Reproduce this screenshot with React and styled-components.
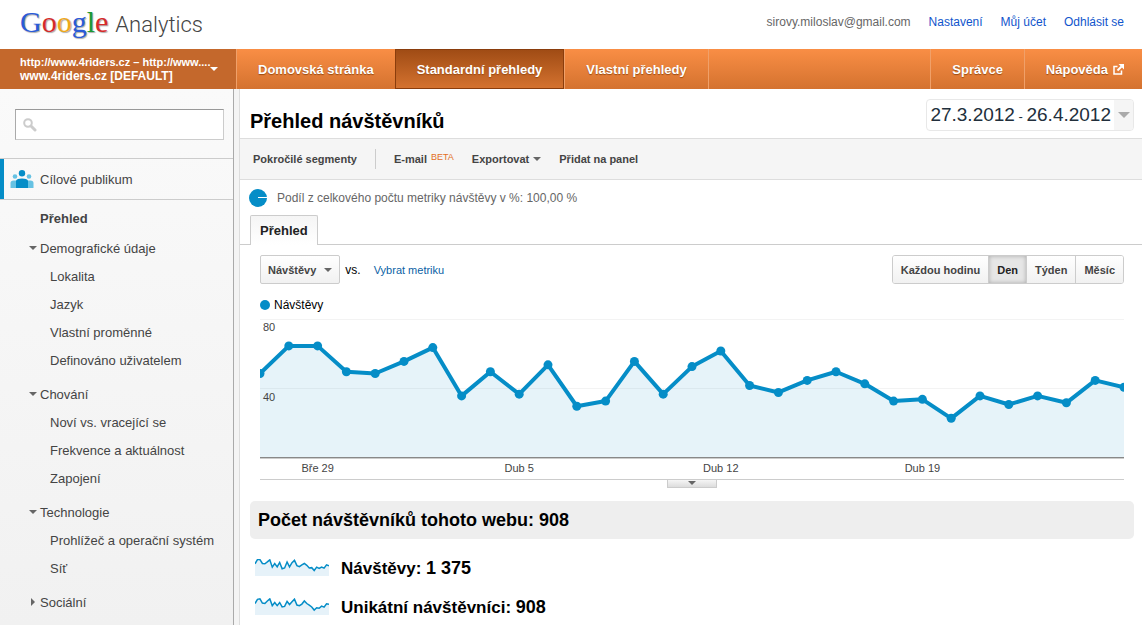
import React from 'react';
import styled, { createGlobalStyle, css } from 'styled-components';

const COLORS = {
  blue: '#058dc7',
  lightBlue: '#66c2e3',
  fill: '#e6f2f9',
  text: '#444',
  muted: '#666',
  link: '#15c',
  border: '#ccc',
  orangeTop: '#f98e45',
  orangeBottom: '#d4722f',
};

const GlobalStyle = createGlobalStyle`
  *, *::before, *::after {
    box-sizing: border-box;
  }

  body {
    margin: 0;
    background: #fff;
    color: #000;
    font-family: 'Liberation Sans', Arial, sans-serif;
    font-size: 13px;
    overflow: hidden;
  }

  button, input {
    font-family: inherit;
  }

  a {
    text-decoration: none;
  }

  h1, h2, p, ul {
    margin: 0;
    padding: 0;
  }

  ul {
    list-style: none;
  }
`;

const VISITS = [
  49, 65, 65, 50, 49, 56, 64, 36, 50, 37, 54, 30, 33, 56, 37, 53,
  62, 42, 38, 45, 50, 43, 33, 34, 23, 36, 31, 36, 32, 45, 41,
];

const VISITORS = [
  46, 62, 64, 48, 46, 56, 64, 38, 50, 38, 50, 33, 35, 54, 42, 53,
  63, 40, 38, 44, 56, 46, 40, 33, 21, 30, 28, 36, 32, 45, 43,
];

const AXIS_LABELS = [
  { day: 2, text: 'Bře 29' },
  { day: 9, text: 'Dub 5' },
  { day: 16, text: 'Dub 12' },
  { day: 23, text: 'Dub 19' },
];

const MENU = [
  {
    title: 'Demografické údaje',
    items: ['Lokalita', 'Jazyk', 'Vlastní proměnné', 'Definováno uživatelem'],
  },
  {
    title: 'Chování',
    items: ['Noví vs. vracející se', 'Frekvence a aktuálnost', 'Zapojení'],
  },
  {
    title: 'Technologie',
    items: ['Prohlížeč a operační systém', 'Síť'],
  },
  { title: 'Sociální', items: [] },
];

const Caret = ({ color = '#666', width = 8, height = 4 }) => (
  <svg width={width} height={height} viewBox="0 0 8 4" aria-hidden="true">
    <path d="M0 0h8L4 4z" fill={color} />
  </svg>
);

const SearchIcon = () => (
  <svg width="14" height="14" viewBox="0 0 14 14" aria-hidden="true">
    <circle cx="5" cy="5" r="3.8" fill="none" stroke="#ccc" strokeWidth="2" />
    <path d="M8 8l4 4" stroke="#ccc" strokeWidth="3" strokeLinecap="round" />
  </svg>
);

const AudienceIcon = () => (
  <svg width="24" height="19" viewBox="0 0 24 19" aria-hidden="true">
    <g fill={COLORS.lightBlue}>
      <circle cx="5" cy="6.5" r="2.3" />
      <circle cx="19" cy="6.5" r="2.3" />
      <path d="M0.5 18v-5q0-2.500 3-2.500h17q3 0 3 2.500v5z" />
    </g>
    <g fill={COLORS.blue}>
      <circle cx="12" cy="3.300" r="3.200" />
      <path d="M6 18v-7.500q1-2 6-2t6 2v7.500z" />
    </g>
  </svg>
);

const ExternalIcon = () => (
  <svg width="11" height="11" viewBox="0 0 11 11" fill="none" stroke="#fff" aria-hidden="true">
    <path d="M4.500 2.500H1v7.500h7.500V6.500" strokeWidth="1.500" />
    <path d="M4.500 6.500L8.500 2.500" strokeWidth="2" />
    <path d="M5.500 0h5.500v5.500z" fill="#fff" stroke="none" />
  </svg>
);

const ShareIcon = () => (
  <svg width="18" height="18" viewBox="0 0 18 18" aria-hidden="true">
    <circle cx="9" cy="9" r="9" fill={COLORS.blue} />
    <path d="M9 8.500h9" stroke="#fff" />
  </svg>
);

const VisitsChart = () => {
  const points = VISITS.map((value, i) => [i * 28.8, 139 - value * 1.725]);
  const line = points.map((point) => point.join(',')).join(' ');

  return (
    <ChartSvg viewBox="0 0 864 160" role="img" aria-label="Návštěvy">
      <path d="M0 0.5h864M0 69.5h864" stroke="#f3f3f3" />
      <polygon points={`0,139 ${line} 864,139`} fill={COLORS.blue} fillOpacity="0.1" />
      <polyline points={line} fill="none" stroke={COLORS.blue} strokeWidth="4" strokeLinejoin="round" />
      {points.map(([x, y]) => (
        <circle key={x} cx={x} cy={y} r="4.5" fill={COLORS.blue} />
      ))}
      <path d="M0 138.5h864" stroke="#888" />
      <path d="M0 139.5h864" stroke="#ccc" />
      <AxisText x="3" y="12">80</AxisText>
      <AxisText x="3" y="82">40</AxisText>
      {AXIS_LABELS.map(({ day, text }) => (
        <AxisText key={text} x={day * 28.8} y="153" textAnchor="middle">{text}</AxisText>
      ))}
    </ChartSvg>
  );
};

const Sparkline = ({ data }) => {
  const line = data
    .map((value, i) => `${(i * 74) / (data.length - 1)},${17.5 - value * 0.26}`)
    .join(' ');

  return (
    <svg width="74" height="19" viewBox="0 0 74 19" aria-hidden="true">
      <polygon points={`0,17 ${line} 74,17`} fill={COLORS.fill} />
      <polyline points={line} fill="none" stroke={COLORS.blue} strokeWidth="1.5" />
    </svg>
  );
};

const Header = () => (
  <TopBar>
    <Logo href="#" aria-label="Google Analytics">
      <GoogleMark>
        <Letter $color="#2a5bd7">G</Letter>
        <Letter $color="#d62a2a">o</Letter>
        <Letter $color="#f0a91b">o</Letter>
        <Letter $color="#2a5bd7">g</Letter>
        <Letter $color="#1a9a32">l</Letter>
        <Letter $color="#d62a2a">e</Letter>
      </GoogleMark>
      <ProductName>Analytics</ProductName>
    </Logo>
    <Account>
      <span>sirovy.miloslav@gmail.com</span>
      <AccountLink href="#">Nastavení</AccountLink>
      <AccountLink href="#">Můj účet</AccountLink>
      <AccountLink href="#">Odhlásit se</AccountLink>
    </Account>
  </TopBar>
);

const Navigation = () => (
  <NavBar>
    <ProfileButton type="button">
      <ProfileText>
        <ProfileUrl>http://www.4riders.cz – http://www....</ProfileUrl>
        <span>www.4riders.cz [DEFAULT]</span>
      </ProfileText>
      <Caret color="#fff" />
    </ProfileButton>
    <NavItem href="#">Domovská stránka</NavItem>
    <NavItem href="#" $active>Standardní přehledy</NavItem>
    <NavItem href="#">Vlastní přehledy</NavItem>
    <NavSpacer />
    <NavItem href="#">Správce</NavItem>
    <NavItem href="#" $last>
      Nápověda
      <ExternalIcon />
    </NavItem>
  </NavBar>
);

const Sidebar = () => (
  <Side>
    <SearchBox>
      <SearchIcon />
      <SearchInput type="text" aria-label="Hledat" />
    </SearchBox>
    <Section href="#">
      <AudienceIcon />
      Cílové publikum
    </Section>
    <Menu>
      <CurrentLink href="#">Přehled</CurrentLink>
      {MENU.map(({ title, items }) => (
        <MenuGroup key={title}>
          <GroupButton type="button" aria-expanded={items.length > 0}>
            <Marker $open={items.length > 0}>
              <Caret />
            </Marker>
            {title}
          </GroupButton>
          <ul>
            {items.map((item) => (
              <li key={item}>
                <MenuLink href="#">{item}</MenuLink>
              </li>
            ))}
          </ul>
        </MenuGroup>
      ))}
    </Menu>
  </Side>
);

const App = () => (
  <>
    <GlobalStyle />
    <Page>
      <Header />
      <Navigation />
      <Body>
        <Sidebar />
        <Content>
          <TitleRow>
            <Title>Přehled návštěvníků</Title>
            <DateButton type="button">
              <DateRange>
                27.3.2012<Dash> - </Dash>26.4.2012
              </DateRange>
              <DateArrow>
                <Caret color="#aaa" width={12} height={6} />
              </DateArrow>
            </DateButton>
          </TitleRow>
          <Toolbar>
            <ToolButton type="button">Pokročilé segmenty</ToolButton>
            <ToolDivider />
            <ToolButton type="button">
              E-mail <Beta>BETA</Beta>
            </ToolButton>
            <ToolButton type="button">
              Exportovat <Caret />
            </ToolButton>
            <ToolButton type="button">Přidat na panel</ToolButton>
          </Toolbar>
          <Share>
            <ShareIcon />
            <p>Podíl z celkového počtu metriky návštěvy v %: 100,00 %</p>
          </Share>
          <Tabs>
            <Tab type="button">Přehled</Tab>
          </Tabs>
          <Panel>
            <Controls>
              <MetricButton type="button">
                Návštěvy <Caret />
              </MetricButton>
              <span>vs.</span>
              <MetricLink href="#">Vybrat metriku</MetricLink>
              <Segments>
                <SegmentButton type="button">Každou hodinu</SegmentButton>
                <SegmentButton type="button" $active>Den</SegmentButton>
                <SegmentButton type="button">Týden</SegmentButton>
                <SegmentButton type="button">Měsíc</SegmentButton>
              </Segments>
            </Controls>
            <Legend>
              <Dot />
              Návštěvy
            </Legend>
            <VisitsChart />
            <Expander>
              <ExpandButton type="button" aria-label="Rozbalit">
                <Caret />
              </ExpandButton>
            </Expander>
          </Panel>
          <Summary>Počet návštěvníků tohoto webu: 908</Summary>
          <Metric>
            <Sparkline data={VISITS} />
            <p>Návštěvy: <Value>1 375</Value></p>
          </Metric>
          <Metric>
            <Sparkline data={VISITORS} />
            <p>Unikátní návštěvníci: <Value>908</Value></p>
          </Metric>
        </Content>
      </Body>
    </Page>
  </>
);

const plainButton = css`
  margin: 0;
  padding: 0;
  border: 0;
  background: none;
  cursor: pointer;
`;

const Page = styled.div`
  display: flex;
  flex-direction: column;
  height: 100vh;
`;

const TopBar = styled.header`
  display: flex;
  flex: none;
  justify-content: space-between;
  height: 49px;
  padding: 0 18px 0 20px;
`;

const Logo = styled.a`
  display: flex;
  align-items: baseline;
  gap: 7px;
  line-height: 44px;
`;

const GoogleMark = styled.span`
  font-family: 'Liberation Serif', 'Times New Roman', serif;
  font-size: 30px;
  text-shadow: 1px 1px 1px #aaa;
`;

const Letter = styled.span`
  color: ${({ $color }) => $color};
`;

const ProductName = styled.span`
  font-family: Roboto, sans-serif;
  font-size: 22px;
  font-weight: 300;
  color: #444;
`;

const Account = styled.div`
  display: flex;
  gap: 18px;
  font-size: 12px;
  line-height: 44px;
  color: ${COLORS.muted};
`;

const AccountLink = styled.a`
  color: ${COLORS.link};
`;

const NavBar = styled.nav`
  display: flex;
  flex: none;
  height: 40px;
  background: linear-gradient(${COLORS.orangeTop}, ${COLORS.orangeBottom});
  color: #fff;
  font-weight: bold;
`;

const ProfileButton = styled.button`
  ${plainButton}
  display: flex;
  align-items: center;
  width: 236px;
  padding-left: 20px;
  background: #c4682c;
  color: #fff;
  font-size: 12px;
  font-weight: bold;
  line-height: 14px;
  text-align: left;
`;

const ProfileText = styled.span`
  display: flex;
  flex-direction: column;
`;

const ProfileUrl = styled.span`
  font-size: 11px;
  white-space: nowrap;
`;

const NavItem = styled.a`
  display: flex;
  align-items: center;
  gap: 5px;
  padding: 0 21px;
  border-left: 1px solid #f0a069;
  color: #fff;
  font-size: 13px;
  text-shadow: 0 1px 1px #9a4a12;

  ${({ $active }) => $active && css`
    border: 1px solid #8a3d0c;
    background: linear-gradient(#a04c15, #d4722f);
  `}

  ${({ $last }) => $last && css`
    padding-right: 18px;
  `}
`;

const NavSpacer = styled.div`
  flex: 1;
  border-left: 1px solid #f0a069;
`;

const Body = styled.div`
  display: flex;
  flex: 1;
  min-height: 0;
`;

const Side = styled.aside`
  flex: none;
  width: 234px;
  padding-top: 20px;
  border-right: 1px solid #aaa;
  background: linear-gradient(#fafafa, #f1f1f1);
`;

const SearchBox = styled.label`
  display: flex;
  align-items: center;
  gap: 8px;
  height: 31px;
  margin: 0 9px 18px 15px;
  padding: 0 7px;
  border: 1px solid ${COLORS.border};
  border-top-color: #999;
  border-left-color: #aaa;
  background: #fff;
`;

const SearchInput = styled.input`
  flex: 1;
  min-width: 0;
  border: 0;
  outline: 0;
  background: none;
  font-size: 13px;
`;

const Section = styled.a`
  display: flex;
  align-items: center;
  gap: 6px;
  height: 42px;
  padding-left: 10px;
  border: solid ${COLORS.border};
  border-width: 1px 0;
  box-shadow: inset 4px 0 ${COLORS.blue};
  color: ${COLORS.text};
`;

const Menu = styled.nav`
  color: ${COLORS.text};
  font-size: 13px;
`;

const CurrentLink = styled.a`
  display: block;
  padding: 4px 0 1px 40px;
  color: ${COLORS.text};
  font-weight: bold;
  line-height: 30px;
`;

const MenuGroup = styled.div`
  margin-bottom: 6px;
`;

const GroupButton = styled.button`
  ${plainButton}
  display: flex;
  align-items: center;
  gap: 2px;
  width: 100%;
  padding-left: 28px;
  color: inherit;
  font-size: 13px;
  line-height: 28px;
`;

const Marker = styled.span`
  display: flex;
  justify-content: center;
  width: 10px;
  padding-bottom: 2px;

  svg {
    transform: ${({ $open }) => ($open ? 'none' : 'rotate(-90deg)')};
  }
`;

const MenuLink = styled.a`
  display: block;
  padding-left: 50px;
  color: ${COLORS.text};
  line-height: 28px;
`;

const Content = styled.main`
  flex: 1;
  min-width: 0;
  margin-left: 5px;
  border-left: 1px solid #ddd;
  box-shadow: -5px 0 #f4f4f4;
`;

const TitleRow = styled.div`
  display: flex;
  justify-content: space-between;
  height: 49px;
  padding: 10px 8px 0 10px;
`;

const Title = styled.h1`
  font-size: 20px;
  line-height: 44px;
`;

const DateButton = styled.button`
  ${plainButton}
  display: flex;
  height: 32px;
  overflow: hidden;
  border: 1px solid #e8e8e8;
  border-radius: 4px;
  color: #222f3c;
`;

const DateRange = styled.span`
  padding: 0 3px;
  font-size: 19px;
  line-height: 30px;
`;

const Dash = styled.span`
  font-size: 13px;
`;

const DateArrow = styled.span`
  display: flex;
  align-items: center;
  justify-content: center;
  align-self: stretch;
  width: 19px;
  background: #f5f5f5;
`;

const Toolbar = styled.div`
  display: flex;
  align-items: center;
  height: 42px;
  padding-left: 13px;
  gap: 18px;
  border: solid #ddd;
  border-width: 1px 0;
  background: #f5f5f5;
`;

const ToolButton = styled.button`
  ${plainButton}
  display: flex;
  align-items: center;
  gap: 4px;
  color: ${COLORS.text};
  font-size: 11px;
  font-weight: bold;
`;

const ToolDivider = styled.span`
  width: 1px;
  height: 20px;
  background: ${COLORS.border};
`;

const Beta = styled.sup`
  align-self: flex-start;
  color: #e36f1e;
  font-size: 9px;
  font-weight: normal;
  line-height: 8px;
`;

const Share = styled.div`
  display: flex;
  align-items: center;
  gap: 10px;
  height: 35px;
  padding-left: 9px;
  color: ${COLORS.muted};
  font-size: 12px;
`;

const Tabs = styled.div`
  display: flex;
  height: 30px;
  padding-left: 10px;
  border-bottom: 1px solid ${COLORS.border};
`;

const Tab = styled.button`
  ${plainButton}
  height: 30px;
  padding: 0 9px;
  border: 1px solid ${COLORS.border};
  border-bottom: 0;
  border-radius: 2px 2px 0 0;
  background: linear-gradient(#f5f5f5, #fff);
  color: #222;
  font-size: 13px;
  font-weight: bold;
`;

const Panel = styled.div`
  padding: 10px 18px 0 20px;
`;

const Controls = styled.div`
  display: flex;
  align-items: center;
  gap: 5px;
  font-size: 12px;
`;

const MetricButton = styled.button`
  ${plainButton}
  display: flex;
  align-items: center;
  gap: 8px;
  height: 29px;
  padding: 0 7px;
  border: 1px solid ${COLORS.border};
  border-radius: 2px;
  background: linear-gradient(#fff, #f1f1f1);
  color: ${COLORS.text};
  font-size: 11px;
  font-weight: bold;
`;

const MetricLink = styled.a`
  margin-left: 8px;
  color: #0b5fa5;
  font-size: 11px;
`;

const Segments = styled.div`
  display: flex;
  height: 29px;
  margin-left: auto;
  overflow: hidden;
  border: 1px solid ${COLORS.border};
  border-radius: 3px;
`;

const SegmentButton = styled.button`
  ${plainButton}
  padding: 0 8px;
  background: linear-gradient(#fff, #f1f1f1);
  color: ${COLORS.text};
  font-size: 11px;
  font-weight: bold;

  & + & {
    border-left: 1px solid ${COLORS.border};
  }

  ${({ $active }) => $active && css`
    background: #e6e6e6;
    box-shadow: inset 0 0 4px #aaa;
    color: #222;
  `}
`;

const Legend = styled.div`
  display: flex;
  align-items: center;
  gap: 4px;
  height: 35px;
  padding-top: 7px;
  font-size: 12px;
`;

const Dot = styled.span`
  width: 10px;
  height: 10px;
  border-radius: 50%;
  background: ${COLORS.blue};
`;

const ChartSvg = styled.svg`
  display: block;
  width: 100%;
`;

const AxisText = styled.text`
  fill: ${COLORS.text};
  font-size: 11px;
`;

const Expander = styled.div`
  display: flex;
  justify-content: center;
  border-top: 1px solid ${COLORS.border};
`;

const ExpandButton = styled.button`
  ${plainButton}
  display: flex;
  justify-content: center;
  width: 50px;
  height: 8px;
  padding-top: 1px;
  border: 1px solid ${COLORS.border};
  border-top: 0;
  background: linear-gradient(#f5f5f5, #ddd);
`;

const Summary = styled.h2`
  margin: 13px 8px 10px 10px;
  padding: 0 8px;
  border-radius: 5px;
  background: #eee;
  font-size: 18px;
  line-height: 38px;
`;

const Metric = styled.div`
  display: flex;
  align-items: center;
  gap: 12px;
  height: 39px;
  padding-left: 15px;
  font-size: 17px;
  font-weight: bold;
`;

const Value = styled.span`
  font-size: 18px;
`;

export default App;
